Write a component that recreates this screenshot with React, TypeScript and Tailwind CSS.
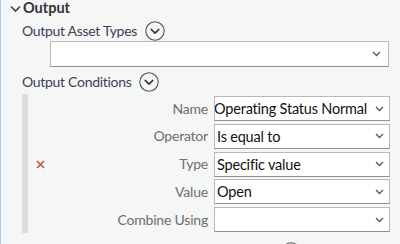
import React from 'react';

const font = "font-['Lato','Noto_Sans',sans-serif]";

function CircleChevron() {
  return (
    <svg width="20" height="20" viewBox="0 0 20 20" fill="none">
      <circle cx="10" cy="10" r="9.2" stroke="#555" strokeWidth="1.1" />
      <path d="M6.2 8.4 L10 12.1 L13.8 8.4" stroke="#333" strokeWidth="1.5" strokeLinecap="round" strokeLinejoin="round" />
    </svg>
  );
}

function SmallChevron() {
  return (
    <svg width="9" height="6" viewBox="0 0 9 6" fill="none">
      <path d="M1 1 L4.5 4.5 L8 1" stroke="#555" strokeWidth="1.3" />
    </svg>
  );
}

function Select({ value, clip }: { value?: string; clip?: boolean }) {
  return (
    <div className="flex h-[25px] w-[176px] shrink-0 items-center border border-[#b8b8b8] border-b-[#8f8f8f] bg-white">
      <div className={`flex min-w-0 flex-1 overflow-hidden whitespace-nowrap text-[14.5px] leading-[21px] tracking-[-0.2px] text-[#111] ${clip ? 'justify-end' : 'pl-[2px]'}`}>
        {value}
      </div>
      <div className="flex w-[22px] shrink-0 justify-center pl-[2px]">
        <SmallChevron />
      </div>
    </div>
  );
}

const rows = [
  { label: 'Name', value: 'Operating Status Normal', clip: true },
  { label: 'Operator', value: 'Is equal to' },
  { label: 'Type', value: 'Specific value', remove: true },
  { label: 'Value', value: 'Open' },
  { label: 'Combine Using', value: '' },
];

export default function App() {
  return (
    <div className={`h-[244px] w-[400px] overflow-hidden border-l border-[#a9d1f2] bg-[#f5f6f6] ${font}`}>
      {/* section header */}
      <div className="flex h-[17px] items-center pl-[9px]">
        <svg width="11" height="8" viewBox="0 0 11 8" fill="none">
          <path d="M1 1.5 L5.5 6 L10 1.5" stroke="#444" strokeWidth="1.6" />
        </svg>
        <span className="ml-[2px] text-[14.5px] font-bold leading-none text-[#333]">Output</span>
      </div>

      <div className="pl-[21px] pr-[10px]">
        <div className="mt-[5px] flex h-[18px] items-center gap-[8px]">
          <span className="text-[14px] leading-none tracking-[-0.3px] text-[#3e3e58]">Output Asset Types</span>
          <CircleChevron />
        </div>
        <div className="ml-[28px] mt-[1px] flex h-[26px] w-[339px] items-center justify-end border border-[#b8b8b8] border-b-[#8f8f8f] bg-white pr-[7px]">
          <SmallChevron />
        </div>

        <div className="mt-[6px] flex h-[18px] items-center gap-[8px]">
          <span className="text-[14px] leading-none tracking-[-0.3px] text-[#3e3e58]">Output Conditions</span>
          <CircleChevron />
        </div>

        {/* conditions block */}
        <div className="mt-[3px] flex">
          <div className="w-[6px] shrink-0 bg-[#dcdcdc]" />
          <div className="flex flex-1 flex-col gap-[2.75px] pt-[2px] pb-[1px]">
            {rows.map((r) => (
              <div key={r.label} className="flex items-center">
                <div className="flex w-[17px] justify-end">
                  {r.remove && (
                    <svg width="9" height="9" viewBox="0 0 9 9">
                      <path d="M1 1 L8 8 M8 1 L1 8" stroke="#c8583c" strokeWidth="1.7" />
                    </svg>
                  )}
                </div>
                <div className="flex-1 pr-[6px] text-right text-[14px] leading-none tracking-[-0.2px] text-[#6e6e6e]">{r.label}</div>
                <Select value={r.value} clip={r.clip} />
              </div>
            ))}
          </div>
        </div>

        <div className="mt-[9px] flex pl-[259px]">
          <CircleChevron />
        </div>
      </div>
    </div>
  );
}
